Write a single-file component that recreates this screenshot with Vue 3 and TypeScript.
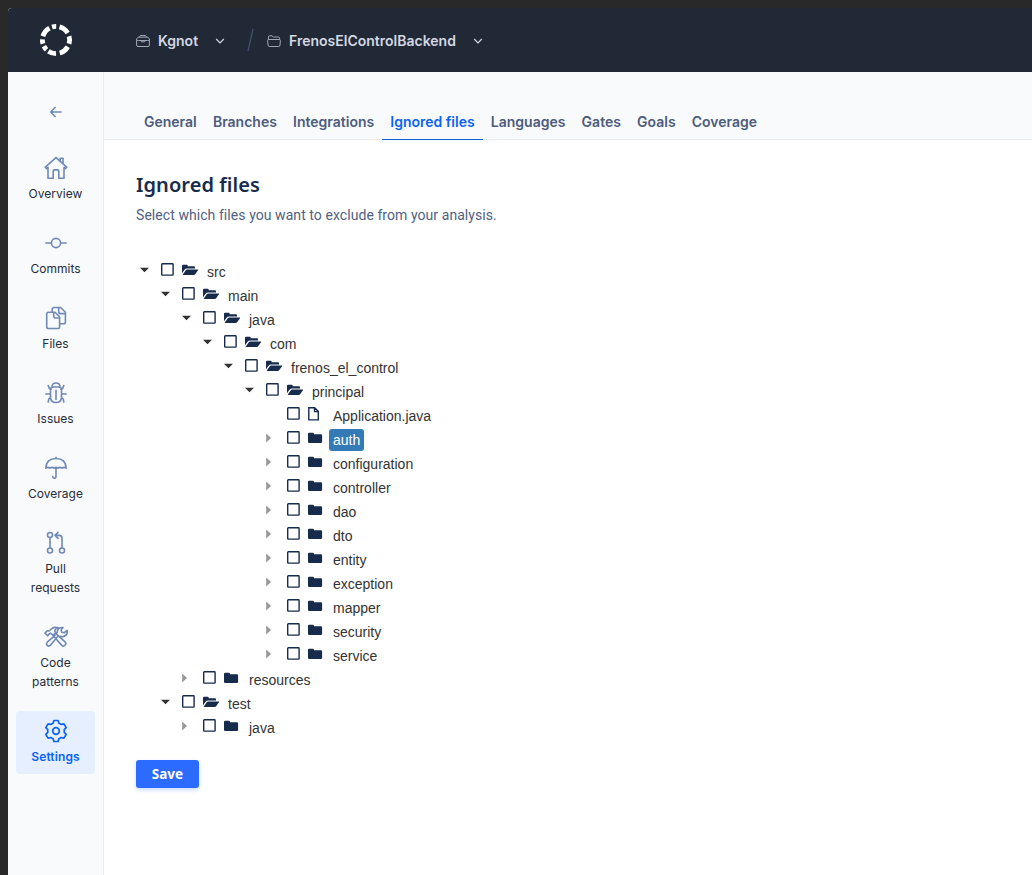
<script setup lang="ts">
interface TreeRow {
  name: string
  level: number
  kind: 'open' | 'closed' | 'file'
  selected?: boolean
}

const tabs: string[] = ['General', 'Branches', 'Integrations', 'Ignored files', 'Languages', 'Gates', 'Goals', 'Coverage']
const activeTab = 'Ignored files'

const nav: { id: string; lines: string[] }[] = [
  { id: 'overview', lines: ['Overview'] },
  { id: 'commits', lines: ['Commits'] },
  { id: 'files', lines: ['Files'] },
  { id: 'issues', lines: ['Issues'] },
  { id: 'coverage', lines: ['Coverage'] },
  { id: 'pulls', lines: ['Pull', 'requests'] },
  { id: 'patterns', lines: ['Code', 'patterns'] },
  { id: 'settings', lines: ['Settings'] },
]

const packages: string[] = ['auth', 'configuration', 'controller', 'dao', 'dto', 'entity', 'exception', 'mapper', 'security', 'service']

const rows: TreeRow[] = [
  { name: 'src', level: 0, kind: 'open' },
  { name: 'main', level: 1, kind: 'open' },
  { name: 'java', level: 2, kind: 'open' },
  { name: 'com', level: 3, kind: 'open' },
  { name: 'frenos_el_control', level: 4, kind: 'open' },
  { name: 'principal', level: 5, kind: 'open' },
  { name: 'Application.java', level: 6, kind: 'file' },
  ...packages.map((name): TreeRow => ({ name, level: 6, kind: 'closed', selected: name === 'auth' })),
  { name: 'resources', level: 2, kind: 'closed' },
  { name: 'test', level: 1, kind: 'open' },
  { name: 'java', level: 2, kind: 'closed' },
]
</script>

<template>
  <div class="desktop">
    <div class="window">
      <header class="topbar">
        <svg class="logo" width="34" height="34" viewBox="-17 -17 34 34" fill="none" stroke="#fff" stroke-width="4.8">
          <circle r="13.6" pathLength="360" stroke-dasharray="18 14 44 15 32 14 44 16 34 10 19 11 19 13 45 12" transform="rotate(-107)" />
        </svg>
        <div class="crumb org">
          <svg width="14" height="14" viewBox="0 0 14 14" fill="none" stroke="#a0a8b8" stroke-width="1">
            <path d="M3.8 3.2V2.5Q3.8 1.5 4.8 1.5H9.2Q10.2 1.5 10.2 2.5V3.2M2.2 3.2H11.8L13.4 5V11Q13.4 12.5 12 12.5H2Q.6 12.5 .6 11V5ZM.6 6.2Q1 6.5 2.5 6.5H11.5Q13 6.5 13.4 6.2M5 6.5V7.2Q5 7.8 5.8 7.8H8.2Q9 7.8 9 7.2V6.5" />
          </svg>
          <span>Kgnot</span>
          <svg class="chev" width="10" height="8" viewBox="0 0 10 8" fill="none" stroke="#d3d8e3" stroke-width="1.2"><path d="M1.2 2L5 5.8L8.8 2" /></svg>
        </div>
        <svg class="slash" width="8" height="24" viewBox="0 0 8 24" stroke="#44536f" stroke-width="1.2"><path d="M6 1L1 23" /></svg>
        <div class="crumb repo">
          <svg width="14" height="14" viewBox="0 0 14 14" fill="none" stroke="#a0a8b8" stroke-width="1">
            <path d="M1.4 5.5V3Q1.4 1.8 2.6 1.8H5L6.3 3H11.3Q12.6 3 12.6 4.2V5.5M1.8 5.5H12.2Q13.5 5.5 13.4 6.6L13 11Q12.9 12.5 11.6 12.5H2.4Q1.1 12.5 1 11L.6 6.6Q.5 5.5 1.8 5.5Z" />
          </svg>
          <span>FrenosElControlBackend</span>
          <svg class="chev" width="10" height="8" viewBox="0 0 10 8" fill="none" stroke="#d3d8e3" stroke-width="1.2"><path d="M1.2 2L5 5.8L8.8 2" /></svg>
        </div>
      </header>

      <div class="body">
        <aside class="sidebar">
          <div class="back">
            <svg width="14" height="14" viewBox="0 0 14 14" fill="none" stroke="#7189b5" stroke-width="1.6"><path d="M12.6 7H2M6.6 2L1.7 7L6.6 12" /></svg>
          </div>
          <nav>
            <div v-for="item in nav" :key="item.id" class="nav-item" :class="{ active: item.id === 'settings' }">
              <svg width="24" height="24" viewBox="0 0 24 24" fill="none" stroke="currentColor" stroke-width="1.6" stroke-linecap="round" stroke-linejoin="round">
                <path v-if="item.id === 'overview'" d="M1.3 11.2L12 1.7L22.7 11.2L21.4 12.6L20 11.4V22.2H14.8V15.2Q14.8 13.9 13.5 13.9H10.5Q9.2 13.9 9.2 15.2V22.2H4V11.4L2.6 12.6ZM16.2 5.2V2.2H19V7.7" />
                <template v-else-if="item.id === 'commits'"><circle cx="12" cy="12" r="4.6" /><path d="M1.8 12H7.3M16.7 12H22.2" /></template>
                <path v-else-if="item.id === 'files'" d="M11 6.2H4.6Q2.7 6.2 2.7 8V20.7Q2.7 22.5 4.5 22.5H13.8Q15.6 22.5 15.6 20.7V10.8ZM9.7 6.3V9.8Q9.7 12 11.7 12H15.4M8.2 5.8V3.3Q8.2 1.5 10 1.5H16.7L21.4 6.2V16Q21.4 17.8 19.6 17.8H16M14.7 1.7V5.7Q14.7 7.6 16.5 7.6H21.2" />
                <path v-else-if="item.id === 'issues'" d="M8 6Q8 2 12 2T16 6M6.5 9Q6.5 6 9 6H15Q17.5 6 17.5 9V16Q17.5 21.5 12 21.5T6.5 16ZM12 9.2V18.4M1.8 13H6.3M17.7 13H22.2M4.2 4.5L5.1 7L7 8.5M19.8 4.5L18.9 7L17 8.5M6.5 16.5L4.8 18L4.2 21M17.5 16.5L19.2 18L19.8 21" />
                <path v-else-if="item.id === 'coverage'" d="M12 1.2V2.4M1.8 12.2Q2.3 2.5 12 2.5T22.2 12.2Q19.8 10.5 18.1 12.2Q16 10.5 14 12.2Q12 10.5 10 12.2Q8 10.5 5.9 12.2Q4 10.5 1.8 12.2ZM12 12V20.2Q12 22.2 10.3 22.2Q8.7 22.2 8.7 20.6" />
                <template v-else-if="item.id === 'pulls'"><circle cx="6" cy="4" r="2.5" /><circle cx="6" cy="19.5" r="2.5" /><circle cx="18" cy="19.5" r="2.5" /><path d="M6 6.7V16.8M18 16.8V7.2Q18 4.4 15.2 4.4H11M14 1.4L11 4.4L14 7.4" /></template>
                <path v-else-if="item.id === 'patterns'" d="M5.2 8.4L3.4 10.7L.7 8L3 5.7L4.7 5.9L7.7 3.4Q10 1.6 14 2.7Q10.8 3.8 10.4 5.6L11.3 7.3L10 9L8.3 9.9L6.6 8.3ZM11.3 8.3L21 17.1Q22.3 18.6 20.7 20.2T17.5 20.3L9.2 10.9M13 11.8L5.9 20.3Q4.2 21.6 2.9 20.3T3 17L10.7 10.3M12.8 7.6Q13.1 2.2 18.7 2.4L16.8 5L17.5 7.2L20.1 7.5L22.8 5.3Q23.8 10.6 18.2 11.7L15.8 11.1" transform="translate(.3 .1)" />
                <template v-else><circle cx="12" cy="12" r="3.3" stroke-width="1.7" /><path stroke-width="1.7" d="M9.9 1.5H14.1L14.9 4.2Q16 4.6 17.2 5.5L19.9 4.9L22.2 8.6L20.2 10.6Q20.5 12 20.2 13.4L22.2 15.4L19.9 19.1L17.2 18.5Q16 19.4 14.9 19.8L14.1 22.5H9.9L9.1 19.8Q8 19.4 6.8 18.5L4.1 19.1L1.8 15.4L3.8 13.4Q3.5 12 3.8 10.6L1.8 8.6L4.1 4.9L6.8 5.5Q8 4.6 9.1 4.2Z" /></template>
              </svg>
              <div class="nav-label"><div v-for="line in item.lines" :key="line">{{ line }}</div></div>
            </div>
          </nav>
        </aside>

        <main>
          <div class="tabs">
            <a v-for="tab in tabs" :key="tab" class="tab" :class="{ current: tab === activeTab }">{{ tab }}</a>
          </div>
          <section class="content">
            <h1>Ignored files</h1>
            <p>Select which files you want to exclude from your analysis.</p>
            <div class="tree">
              <div v-for="(row, i) in rows" :key="i" class="row" :class="'level-' + row.level">
                <span class="toggle">
                  <svg v-if="row.kind === 'open'" width="9" height="6" viewBox="0 0 9 6"><path d="M0 .7H9L4.5 5.3Z" fill="#333" /></svg>
                  <svg v-else-if="row.kind === 'closed'" width="6" height="10" viewBox="0 0 6 10"><path d="M.2 .5L5 5L.2 9.5Z" fill="#999" /></svg>
                </span>
                <svg class="check" width="13" height="13" viewBox="0 0 13 13" fill="none" stroke="#172b4d" stroke-width="1.4"><rect x=".7" y=".7" width="11.4" height="11.4" rx=".7" /></svg>
                <span class="icon">
                  <svg v-if="row.kind === 'open'" width="17" height="12" viewBox="0 0 17 12" fill="#172b4d"><path d="M0 9.3V1.7Q0 .7 1 .7H4.7Q5.7 .7 5.7 1.7V2.2H12Q13 2.2 13 3.2V4.5H5.2Q3.5 4.5 2.5 5.7ZM.7 10.8L3.6 6.4Q4.2 5.4 5.3 5.4H15.8Q16.4 5.5 16 6.2L13.3 10Q12.7 11 11.6 11H1Z" /></svg>
                  <svg v-else-if="row.kind === 'closed'" width="16" height="12" viewBox="0 0 16 12" fill="#172b4d"><path d="M0 2Q0 .7 1.3 .7H4.7Q6 .7 6 2V2.3H12.8Q14.1 2.3 14.1 3.6V9.7Q14.1 11 12.8 11H1.3Q0 11 0 9.7Z" /></svg>
                  <svg v-else width="12" height="14" viewBox="0 0 12 14" fill="none" stroke="#172b4d" stroke-width="1.4"><path d="M.8 .7H6.6L10.3 4.4V12.9H.8ZM6.5 .7V4.6H10.3" /></svg>
                </span>
                <span class="name" :class="{ selected: row.selected }">{{ row.name }}</span>
              </div>
            </div>
            <button type="button">Save</button>
          </section>
        </main>
      </div>
    </div>
  </div>
</template>

<style>
body { margin: 0; }
</style>

<style scoped>
* { box-sizing: border-box; }
svg { display: block; flex: none; }
.desktop { width: 1032px; height: 875px; padding: 8px 0 0 8px; overflow: hidden; background: #292929; font-family: Inter, sans-serif; }
.window { height: 867px; border-top-left-radius: 4px; overflow: hidden; background: #fff; }
.topbar { height: 64px; display: flex; align-items: center; padding-left: 31px; background: #222936; color: #d3d8e3; border-top-left-radius: 3px; }
.crumb { display: flex; align-items: center; font-size: 14px; font-weight: 600; height: 20px; margin-top: 1px; }
.crumb span { margin-left: 8px; }
.org { margin-left: 63px; }
.chev { margin-left: 17px; }
.slash { margin-left: 22px; }
.repo { margin-left: 12px; }
.body { display: flex; height: 803px; }
.sidebar { width: 96px; flex: none; padding: 33px 8px 0; background: #f9fafc; border-right: 1px solid #ebecf0; }
.back { display: flex; justify-content: center; height: 39px; }
.nav-item { display: flex; flex-direction: column; align-items: center; padding: 12px 0 8px; margin-bottom: 8px; font-size: 12px; line-height: 19px; color: #7189b5; border-radius: 4px; }
.nav-label { padding-top: 4px; text-align: center; color: #242c3b; letter-spacing: .02px; }
.nav-item.active { margin-top: 12px; padding: 8px 0; background: #e6efff; color: #0b63f3; }
.nav-item.active .nav-label { color: #0b63f3; font-weight: 600; letter-spacing: .1px; }
main { flex: 1; min-width: 0; }
.tabs { display: flex; align-items: flex-end; gap: .16px; height: 68px; padding-left: 32px; background: #f9fafc; border-bottom: 1px solid #ebecf0; }
.tab { height: 36px; margin-bottom: -1px; padding: 0 8px; font-size: 14px; line-height: 36px; font-weight: 600; color: #4d5c7d; border-bottom: 1px solid transparent; }
.tab.current { color: #0b63f3; border-color: #0b5ed7; }
.content { padding: 32px 32px 0; font-family: "Noto Sans", sans-serif; }
h1 { margin: 0; color: #172b4d; font-size: 20px; line-height: 26px; font-weight: 600; letter-spacing: .07px; }
p { margin: 7px 0 0; color: #505f82; font-family: Roboto, sans-serif; font-size: 14px; line-height: 20px; letter-spacing: .065px; }
.tree { margin-top: 35px; }
.row { display: flex; height: 24px; padding-left: 4px; align-items: flex-start; }
.level-1 { margin-left: 21px; }
.level-2 { margin-left: 42px; }
.level-3 { margin-left: 63px; }
.level-4 { margin-left: 84px; }
.level-5 { margin-left: 105px; }
.level-6 { margin-left: 126px; }
.toggle { width: 21px; height: 20px; display: flex; align-items: center; flex: none; }
.check { margin-top: 3px; }
.icon { width: 21px; height: 20px; margin-left: 8px; display: flex; align-items: center; flex: none; }
.name { height: 22px; margin-top: 1px; padding: 0 4px; font-family: "Liberation Sans", Arial, sans-serif; font-size: 14px; line-height: 22px; color: #333; border-radius: 3px; }
.selected { background: #337ab7; color: #fff; }
button { display: block; width: 63px; height: 28px; margin-top: 20px; padding: 0; border: 0; border-radius: 3px; background: #2b6bff; color: #fff; font: 700 13.5px/28px "Noto Sans", sans-serif; box-shadow: 0 2px 4px rgba(43, 107, 255, .25); }
</style>
